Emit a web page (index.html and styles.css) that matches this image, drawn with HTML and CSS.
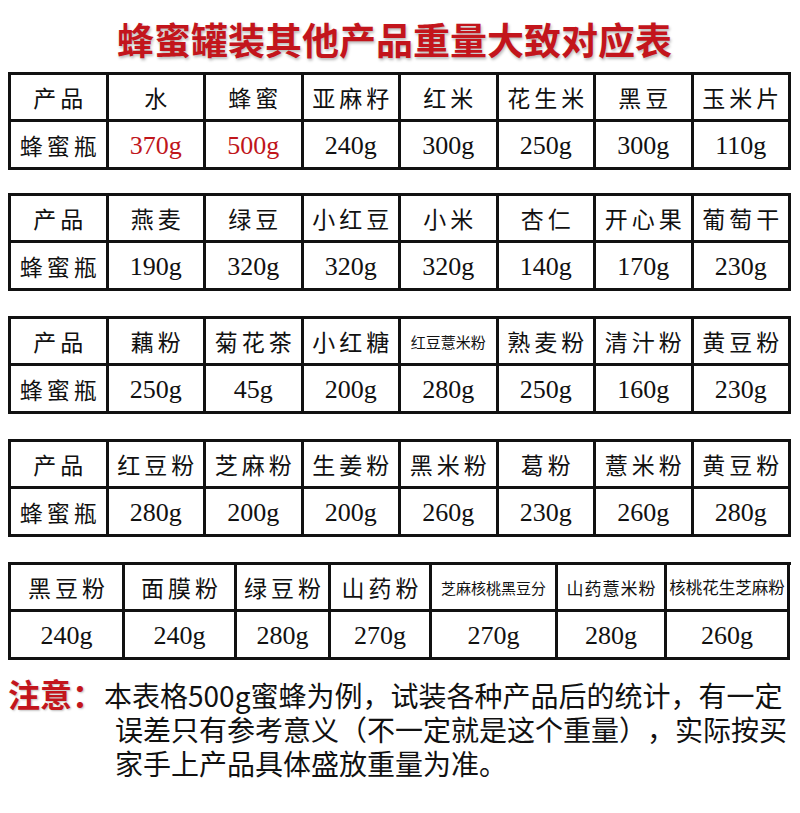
FILE: index.html
```html
<!DOCTYPE html>
<html lang="zh-CN">
<head>
<meta charset="utf-8">
<title>蜂蜜罐装其他产品重量大致对应表</title>
<link rel="stylesheet" href="styles.css">
</head>
<body>
<div class="page">
  <h1 class="title">蜂蜜罐装其他产品重量大致对应表</h1>

  <div class="tables">
    <div class="grid grid-8 first">
      <div class="cell head">产品</div>
      <div class="cell head">水</div>
      <div class="cell head">蜂蜜</div>
      <div class="cell head">亚麻籽</div>
      <div class="cell head">红米</div>
      <div class="cell head">花生米</div>
      <div class="cell head">黑豆</div>
      <div class="cell head">玉米片</div>
      <div class="cell head">蜂蜜瓶</div>
      <div class="cell num red">370g</div>
      <div class="cell num red">500g</div>
      <div class="cell num">240g</div>
      <div class="cell num">300g</div>
      <div class="cell num">250g</div>
      <div class="cell num">300g</div>
      <div class="cell num">110g</div>
    </div>

    <div class="grid grid-8">
      <div class="cell head">产品</div>
      <div class="cell head">燕麦</div>
      <div class="cell head">绿豆</div>
      <div class="cell head">小红豆</div>
      <div class="cell head">小米</div>
      <div class="cell head">杏仁</div>
      <div class="cell head">开心果</div>
      <div class="cell head">葡萄干</div>
      <div class="cell head">蜂蜜瓶</div>
      <div class="cell num">190g</div>
      <div class="cell num">320g</div>
      <div class="cell num">320g</div>
      <div class="cell num">320g</div>
      <div class="cell num">140g</div>
      <div class="cell num">170g</div>
      <div class="cell num">230g</div>
    </div>

    <div class="grid grid-8">
      <div class="cell head">产品</div>
      <div class="cell head">藕粉</div>
      <div class="cell head">菊花茶</div>
      <div class="cell head">小红糖</div>
      <div class="cell head small">红豆薏米粉</div>
      <div class="cell head">熟麦粉</div>
      <div class="cell head">清汁粉</div>
      <div class="cell head">黄豆粉</div>
      <div class="cell head">蜂蜜瓶</div>
      <div class="cell num">250g</div>
      <div class="cell num">45g</div>
      <div class="cell num">200g</div>
      <div class="cell num">280g</div>
      <div class="cell num">250g</div>
      <div class="cell num">160g</div>
      <div class="cell num">230g</div>
    </div>

    <div class="grid grid-8">
      <div class="cell head">产品</div>
      <div class="cell head">红豆粉</div>
      <div class="cell head">芝麻粉</div>
      <div class="cell head">生姜粉</div>
      <div class="cell head">黑米粉</div>
      <div class="cell head">葛粉</div>
      <div class="cell head">薏米粉</div>
      <div class="cell head">黄豆粉</div>
      <div class="cell head">蜂蜜瓶</div>
      <div class="cell num">280g</div>
      <div class="cell num">200g</div>
      <div class="cell num">200g</div>
      <div class="cell num">260g</div>
      <div class="cell num">230g</div>
      <div class="cell num">260g</div>
      <div class="cell num">280g</div>
    </div>

    <div class="grid grid-7">
      <div class="cell head">黑豆粉</div>
      <div class="cell head">面膜粉</div>
      <div class="cell head">绿豆粉</div>
      <div class="cell head">山药粉</div>
      <div class="cell head small">芝麻核桃黑豆分</div>
      <div class="cell head medium">山药薏米粉</div>
      <div class="cell head small2">核桃花生芝麻粉</div>
      <div class="cell num">240g</div>
      <div class="cell num">240g</div>
      <div class="cell num">280g</div>
      <div class="cell num">270g</div>
      <div class="cell num">270g</div>
      <div class="cell num">280g</div>
      <div class="cell num">260g</div>
    </div>
  </div>

  <div class="note">
    <p class="note-line"><span class="note-label">注意：</span>本表格500g蜜蜂为例，试装各种产品后的统计，有一定</p>
    <p class="note-line indent">误差只有参考意义（不一定就是这个重量），实际按买</p>
    <p class="note-line indent">家手上产品具体盛放重量为准。</p>
  </div>
</div>
</body>
</html>
```

FILE: styles.css
```css
* {
  box-sizing: border-box;
}

html, body {
  margin: 0;
  padding: 0;
  background: #ffffff;
}

.page {
  width: 800px;
  padding: 0 0 0 8px;
  font-family: "Noto Sans CJK SC", "Noto Sans", sans-serif;
  color: #111111;
  text-spacing-trim: space-all;
}

.title {
  margin: 0 0 12px 0;
  padding: 19px 10px 0 0;
  width: 783px;
  text-align: center;
  font-size: 37px;
  line-height: 41px;
  font-weight: 700;
  color: #c3151c;
  letter-spacing: 0;
  text-shadow: 1px 2px 3px rgba(0, 0, 0, 0.28);
}

.tables {
  display: flex;
  flex-direction: column;
  gap: 25px;
}

.grid {
  display: grid;
  width: 783px;
  grid-template-rows: 47px 48px;
  border-left: 3px solid #111;
  border-top: 3px solid #111;
}

.grid.first {
  margin-bottom: -2px;
}

.grid-8 {
  grid-template-columns: repeat(8, 1fr);
}

.grid-7 {
  grid-template-columns: 114px 112px 94px 101px 126px 109px 123px;
}

.cell {
  border-right: 3px solid #111;
  border-bottom: 3px solid #111;
  display: flex;
  align-items: center;
  justify-content: center;
  white-space: nowrap;
  overflow: hidden;
}

.head {
  font-family: "Noto Sans CJK SC", sans-serif;
  font-size: 23px;
  font-weight: 400;
  letter-spacing: 4px;
  padding-left: 4px;
  color: #111;
}

.head.small {
  font-size: 15px;
  letter-spacing: 0;
  padding-left: 0;
}

.head.medium {
  font-size: 17px;
  letter-spacing: 1px;
  padding-left: 1px;
}

.head.small2 {
  font-size: 16.5px;
  letter-spacing: 0;
  padding-left: 0;
}

.num {
  font-family: "Liberation Serif", "Times New Roman", serif;
  font-size: 26px;
  color: #111;
  padding-top: 2px;
}

.num.red {
  color: #c0161b;
}

.note {
  margin-top: 16px;
}

.note-line {
  margin: 0;
  font-size: 28px;
  line-height: 34px;
  white-space: nowrap;
  color: #111;
}

.note-label {
  font-size: 32px;
  font-weight: 700;
  color: #c3151c;
  text-shadow: 1px 1px 2px rgba(0, 0, 0, 0.25);
}

.indent {
  padding-left: 107px;
}
```
